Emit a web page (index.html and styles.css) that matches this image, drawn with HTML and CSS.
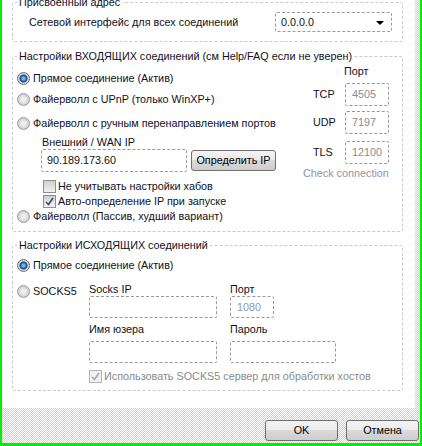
FILE: index.html
```html
<!DOCTYPE html>
<html lang="ru">
<head>
    <meta charset="UTF-8">
    <title>Настройки соединения</title>
    <link rel="stylesheet" href="styles.css">
</head>
<body>
<div class="window">
    <div class="panel">

        <fieldset class="group group-addr">
            <legend>Присвоенный адрес</legend>
            <div class="addr-row">
                <span>Сетевой интерфейс для всех соединений</span>
                <div class="select">0.0.0.0<span class="arrow"></span></div>
            </div>
        </fieldset>

        <fieldset class="group group-in">
            <legend>Настройки ВХОДЯЩИХ соединений (см Help/FAQ если не уверен)</legend>
            <div class="in-body">
                <div class="modes">
                    <div class="opt"><span class="radio on"></span>Прямое соединение (Актив)</div>
                    <div class="opt opt-upnp"><span class="radio"></span>Файерволл с UPnP (только WinXP+)</div>
                    <div class="opt opt-manual"><span class="radio"></span>Файерволл с ручным перенаправлением портов</div>
                    <div class="wan">
                        <div class="wan-label">Внешний / WAN IP</div>
                        <div class="wan-row">
                            <div class="field wan-ip">90.189.173.60</div>
                            <button class="btn btn-detect">Определить IP</button>
                        </div>
                    </div>
                    <div class="chk chk-hubs"><span class="box"></span>Не учитывать настройки хабов</div>
                    <div class="chk chk-auto"><span class="box on"><svg width="9" height="9" viewBox="0 0 9 9"><polyline points="1,5 3.5,7.5 8,1" fill="none" stroke="#2b4f86" stroke-width="1.6"/></svg></span>Авто-определение IP при запуске</div>
                    <div class="opt opt-passive"><span class="radio"></span>Файерволл (Пассив, худший вариант)</div>
                </div>
                <div class="ports">
                    <div class="port-head">Порт</div>
                    <div class="port-row port-tcp"><span>TCP</span><div class="field port">4505</div></div>
                    <div class="port-row port-udp"><span>UDP</span><div class="field port">7197</div></div>
                    <div class="port-row port-tls"><span>TLS</span><div class="field port">12100</div></div>
                    <div class="check-link">Check connection</div>
                </div>
            </div>
        </fieldset>

        <fieldset class="group group-out">
            <legend>Настройки ИСХОДЯЩИХ соединений</legend>
            <div class="out-body">
                <div class="opt"><span class="radio on"></span>Прямое соединение (Актив)</div>
                <div class="socks">
                    <div class="opt opt-socks"><span class="radio"></span>SOCKS5</div>
                    <div class="socks-grid">
                        <div class="lbl">Socks IP</div>
                        <div class="lbl">Порт</div>
                        <div class="field socks-in"></div>
                        <div class="field socks-port">1080</div>
                        <div class="lbl lbl-2">Имя юзера</div>
                        <div class="lbl lbl-2">Пароль</div>
                        <div class="field socks-in"></div>
                        <div class="field socks-pass"></div>
                        <div class="chk chk-off"><span class="box off"><svg width="9" height="9" viewBox="0 0 9 9"><polyline points="1,5 3.5,7.5 8,1" fill="none" stroke="#a8a8a8" stroke-width="1.6"/></svg></span>Использовать SOCKS5 сервер для обработки хостов</div>
                    </div>
                </div>
            </div>
        </fieldset>

    </div>
    <div class="buttons">
        <button class="btn btn-dlg">OK</button>
        <button class="btn btn-dlg">Отмена</button>
    </div>
</div>
</body>
</html>
```

FILE: styles.css
```css
body {
    margin: 0;
    font-family: "Liberation Sans", Arial, sans-serif;
    font-size: 10.8px;
    line-height: 13px;
    color: #10101c;
}

.window {
    width: 422px;
    height: 446px;
    box-sizing: border-box;
    border-left: 2px solid #00f000;
    border-right: 2px solid #00f000;
    border-bottom: 3px solid #00f000;
    display: flex;
    flex-direction: column;
    background-color: #fff;
    background-image: repeating-conic-gradient(#d2d2d2 0 25%, #ffffff 0 50%);
    background-size: 2px 2px;
    overflow: hidden;
}

.panel {
    height: 408px;
    margin-right: 5px;
    padding: 0 12px 0 10px;
    background: #fff;
    overflow: hidden;
}

/* group boxes */
.group {
    margin: 0;
    padding: 0;
    min-width: 0;
    border: 1px dashed #c4cbd4;
    border-radius: 3px;
}
.group legend {
    margin-left: 4px;
    padding: 0 2px;
    line-height: 13px;
}
.group-addr { margin-top: -4px; }
.group-in { margin-top: 8px; }
.group-out { margin-top: 7px; }

.addr-row {
    display: flex;
    justify-content: space-between;
    align-items: center;
    padding: 3px 10px 9px 16px;
}

.select {
    position: relative;
    width: 117px;
    height: 20px;
    box-sizing: border-box;
    border: 1px dashed #9a9a9a;
    border-radius: 2px;
    padding-left: 5px;
    line-height: 18px;
}
.select .arrow {
    position: absolute;
    right: 7px;
    top: 8px;
    border-left: 4px solid transparent;
    border-right: 4px solid transparent;
    border-top: 4px solid #000;
}

/* inputs */
.field {
    height: 23px;
    box-sizing: border-box;
    border: 1px dashed #9a9a9a;
    border-radius: 2px;
    padding-left: 5px;
    line-height: 21px;
    color: #8c8c8c;
}

/* radios and checkboxes */
.opt {
    display: flex;
    align-items: center;
    height: 16px;
    white-space: nowrap;
}
.radio {
    width: 13px;
    height: 13px;
    box-sizing: border-box;
    border-radius: 50%;
    border: 1px solid #9c9c9c;
    background: radial-gradient(circle, #eeeeee 0 2px, #c9c9c9 6px);
    margin-right: 3px;
    flex: none;
}
.radio.on {
    border-color: #6f6f6f;
    background: radial-gradient(circle, #6db0ec 0 1.5px, #1d4f92 3px 3.5px, #d6d6d6 4.5px);
}

.chk {
    display: flex;
    align-items: center;
    height: 14px;
    white-space: nowrap;
}
.box {
    width: 13px;
    height: 13px;
    box-sizing: border-box;
    border: 1px solid #8e8f8f;
    background: linear-gradient(#cfcfcf, #f2f2f2);
    margin-right: 2px;
    display: flex;
    align-items: center;
    justify-content: center;
    flex: none;
}
.box.off {
    border-color: #b5b5b5;
    background: #f0f0f0;
}

/* incoming */
.in-body {
    display: flex;
    justify-content: space-between;
    padding: 0 13px 7px 4px;
}
.modes { padding-top: 7px; }
.opt-upnp { margin-top: 5px; }
.opt-manual { margin-top: 8px; }

.wan {
    margin: 4px 0 0 24px;
}
.wan-label { height: 14px; line-height: 14px; padding-left: 1px; }
.wan-row {
    display: flex;
    align-items: center;
}
.wan-ip {
    width: 146px;
    color: #111;
}

.btn {
    font: inherit;
    color: #000;
    height: 21px;
    box-sizing: border-box;
    border: 1px solid #707070;
    border-radius: 3px;
    background: linear-gradient(#f4f4f4, #ebebeb 45%, #dadada 50%, #cdcdcd);
    padding: 0;
}
.btn-detect {
    width: 85px;
    margin-left: 4px;
}

.chk-hubs { margin: 7px 0 0 26px; }
.chk-auto { margin: 1px 0 0 26px; }
.opt-passive { margin-top: 0; }

.ports {
    width: 86px;
    padding-top: 2px;
}
.port-head { margin-left: 41px; }
.port-row {
    display: flex;
    align-items: center;
}
.port-row span {
    width: 32px;
    padding-left: 10px;
}
.port-tcp { margin-top: 5px; }
.port-udp { margin-top: 5px; }
.port-tls { margin-top: 7px; }
.field.port { width: 44px; padding-left: 6px; }
.check-link {
    margin-top: 3px;
    color: #8c96a6;
    white-space: nowrap;
}

/* outgoing */
.out-body {
    padding: 5px 0 7px 4px;
}
.socks {
    display: flex;
    margin-top: 10px;
}
.opt-socks { width: 72px; }
.socks-grid {
    display: grid;
    grid-template-columns: 128px 106px;
    column-gap: 13px;
}
.lbl { height: 13px; }
.lbl-2 { margin-top: 5px; }
.socks-grid .field { height: 22px; }
.socks-grid .lbl-2 + .lbl-2 + .field,
.socks-grid .lbl-2 + .lbl-2 + .field + .field { margin-top: 5px; }
.socks-port { width: 44px; color: #8b98ad; padding-left: 6px; }
.chk-off {
    grid-column: 1 / -1;
    margin-top: 6px;
    color: #8a8a8a;
}

/* dialog buttons */
.buttons {
    display: flex;
    justify-content: flex-end;
    gap: 8px;
    padding: 12px 1px 0 0;
}
.btn-dlg { width: 73px; }
```
